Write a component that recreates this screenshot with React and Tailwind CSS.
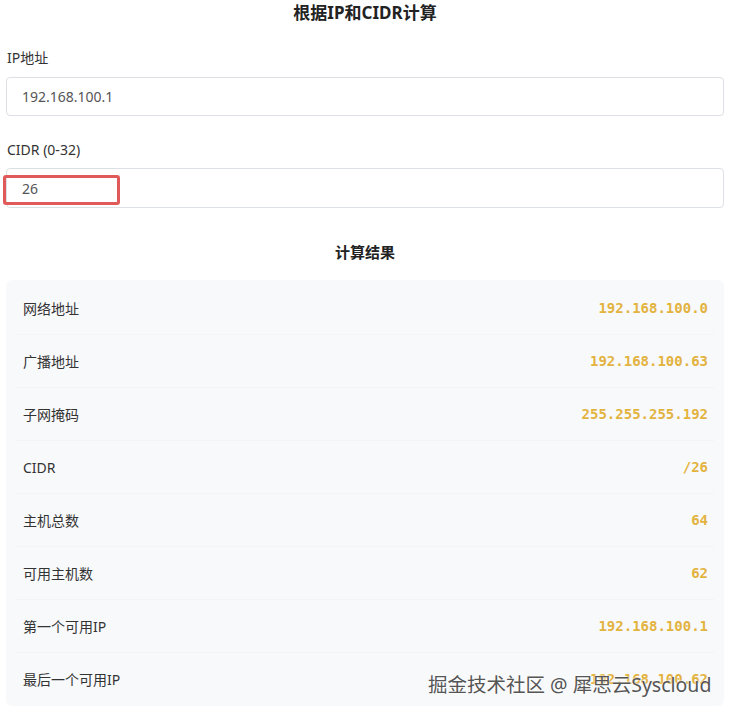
import React from 'react';

const rows = [
  ['网络地址', '192.168.100.0'],
  ['广播地址', '192.168.100.63'],
  ['子网掩码', '255.255.255.192'],
  ['CIDR', '/26'],
  ['主机总数', '64'],
  ['可用主机数', '62'],
  ['第一个可用IP', '192.168.100.1'],
  ['最后一个可用IP', '192.168.100.62'],
];

export default function App() {
  return (
    <div className="relative w-[730px] h-[715px] overflow-hidden bg-white font-['Noto_Sans','Noto_Sans_CJK_SC',sans-serif] text-[#333]">
      <h2 className="text-center text-[17px] font-bold leading-6 pt-[1px] text-[#222]">根据IP和CIDR计算</h2>

      <div className="px-[6px]">
        <label className="block mt-[23px] ml-[1px] text-[14px] leading-5 text-[#333]">IP地址</label>
        <div className="mt-[9px] h-[39px] border border-[#dcdfe3] rounded-[4px] flex items-center pl-[15px] text-[14px] text-[#555]">
          192.168.100.1
        </div>

        <label className="block mt-[24px] ml-[1px] text-[14px] leading-5 text-[#333]">CIDR (0-32)</label>
        <div className="relative mt-[8px] h-[40px] border border-[#dcdfe3] rounded-[4px] flex items-center pl-[15px] text-[14px] text-[#555]">
          26
          <div className="absolute left-[-4px] top-[6px] w-[117px] h-[30px] border-[3px] border-[#e05a5a] rounded-[3px]" />
        </div>

        <h3 className="text-center text-[15px] font-bold leading-6 mt-[32px] text-[#222]">计算结果</h3>

        <div className="mt-[16px] bg-[#f8f9fb] rounded-[6px] px-[10px] pt-[2px]">
          {rows.map(([label, value], i) => (
            <div
              key={label}
              className={`h-[53px] flex items-center justify-between pl-[7px] pr-[6px] ${i < rows.length - 1 ? 'border-b border-[#f3f4f6]' : ''}`}
            >
              <span className="text-[14px] text-[#333]">{label}</span>
              <span className="font-['DejaVu_Sans_Mono',monospace] font-bold text-[14px] text-[#e3b33f]">{value}</span>
            </div>
          ))}
        </div>
      </div>

      <div className="absolute left-[428px] top-[671px] whitespace-nowrap text-[19.5px] leading-7 text-[#555] font-['Noto_Sans','Noto_Sans_CJK_SC',sans-serif] [text-shadow:0_0_2px_#fff,0_0_2px_#fff]">
        掘金技术社区 @ 犀思云Syscloud
      </div>
    </div>
  );
}
